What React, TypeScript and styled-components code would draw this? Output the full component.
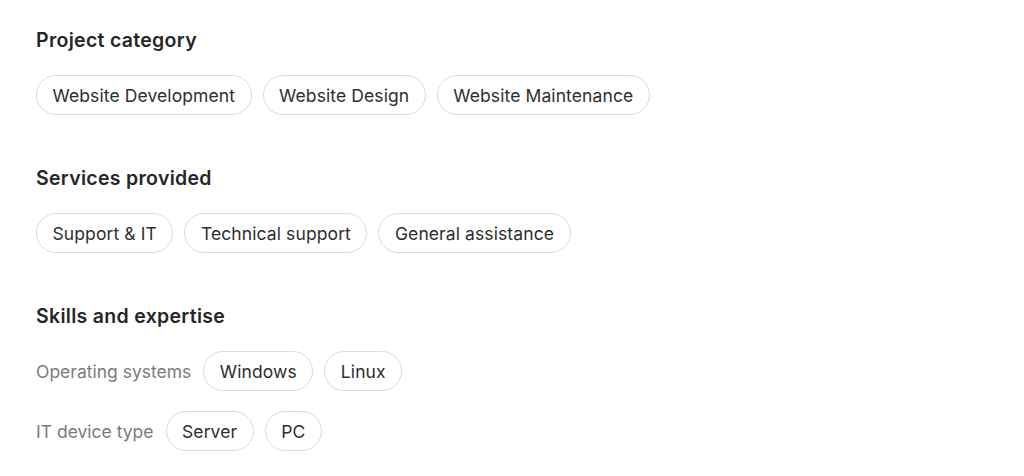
import styled, {createGlobalStyle} from "styled-components";

const GlobalStyle = createGlobalStyle`
  body {
    margin: 0;
    background: #ffffff;
    font-family: Inter, "Noto Sans", sans-serif;
    color: #2a2a2a;
  }
`;

const Page = styled.div`
  display: flex;
  flex-direction: column;
  gap: 51px;
  padding: 28px 36px;
`;

const Section = styled.section`
  display: flex;
  flex-direction: column;
  gap: 23px;
`;

const Heading = styled.h2`
  margin: 0;
  font-size: 19.5px;
  line-height: 24px;
  font-weight: 600;
  letter-spacing: 0.3px;
  color: #262626;
`;

const Rows = styled.div`
  display: flex;
  flex-direction: column;
  gap: 20px;
`;

const ChipRow = styled.div`
  display: flex;
  align-items: center;
  gap: 11px;
`;

const RowLabel = styled.span`
  font-size: 17.5px;
  color: #7b7b7b;
  margin-right: 1px;
`;

const Chip = styled.span`
  display: inline-flex;
  align-items: center;
  height: 40px;
  box-sizing: border-box;
  padding: 0 15.5px;
  border: 1px solid #dcdcdc;
  border-radius: 20px;
  font-size: 17.5px;
  letter-spacing: 0.1px;
  color: #2e2e2e;
  white-space: nowrap;
`;

type Row = { label?: string; chips: string[] };

const sections: { title: string; rows: Row[] }[] = [
    {title: "Project category", rows: [{chips: ["Website Development", "Website Design", "Website Maintenance"]}]},
    {title: "Services provided", rows: [{chips: ["Support & IT", "Technical support", "General assistance"]}]},
    {
        title: "Skills and expertise",
        rows: [
            {label: "Operating systems", chips: ["Windows", "Linux"]},
            {label: "IT device type", chips: ["Server", "PC"]},
        ],
    },
];

function App() {
    return (
        <>
            <GlobalStyle/>
            <Page>
                {sections.map(section => (
                    <Section key={section.title}>
                        <Heading>{section.title}</Heading>
                        <Rows>
                            {section.rows.map((row, i) => (
                                <ChipRow key={i}>
                                    {row.label && <RowLabel>{row.label}</RowLabel>}
                                    {row.chips.map(chip => <Chip key={chip}>{chip}</Chip>)}
                                </ChipRow>
                            ))}
                        </Rows>
                    </Section>
                ))}
            </Page>
        </>
    );
}

export default App;
